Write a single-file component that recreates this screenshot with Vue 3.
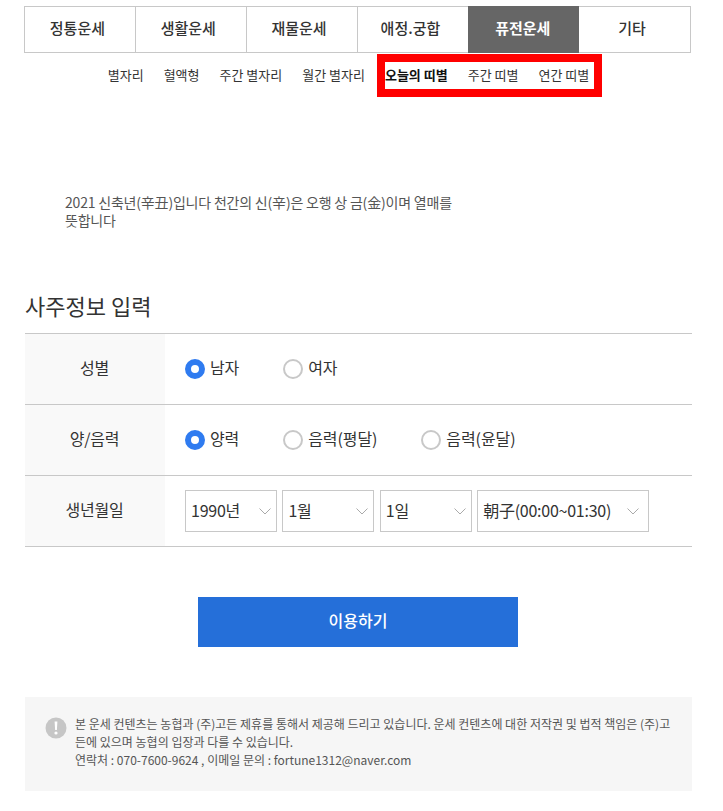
<script setup>
import { ref } from "vue";

const menus = ["정통운세", "생활운세", "재물운세", "애정.궁합", "퓨전운세", "기타"];
const subMenus = ["별자리", "혈액형", "주간 별자리", "월간 별자리", "오늘의 띠별", "주간 띠별", "연간 띠별"];

const gender = ref("남자");
const calendar = ref("양력");
const year = ref("1990년");
const month = ref("1월");
const day = ref("1일");
const time = ref("朝子(00:00~01:30)");

const genders = ["남자", "여자"];
const calendars = ["양력", "음력(평달)", "음력(윤달)"];
const years = ["1989년", "1990년", "1991년"];
const months = ["1월", "2월", "3월"];
const days = ["1일", "2일", "3일"];
const times = ["朝子(00:00~01:30)", "丑(01:30~03:30)"];
</script>

<template>
  <div class="page">
    <nav class="menu">
      <a v-for="m in menus" :key="m" class="menu-item" :class="{ active: m === '퓨전운세' }">{{ m }}</a>
    </nav>

    <div class="sub-menu">
      <a v-for="s in subMenus" :key="s" class="sub-item" :class="{ active: s === '오늘의 띠별' }">{{ s }}</a>
      <div class="highlight"></div>
    </div>

    <p class="desc">2021 신축년(辛丑)입니다 천간의 신(辛)은 오행 상 금(金)이며 열매를 뜻합니다</p>

    <h2 class="title">사주정보 입력</h2>

    <div class="form">
      <div class="row">
        <div class="label">성별</div>
        <div class="field radios">
          <label v-for="g in genders" :key="g" class="radio">
            <input v-model="gender" type="radio" name="gender" :value="g" />
            <span>{{ g }}</span>
          </label>
        </div>
      </div>
      <div class="row">
        <div class="label">양/음력</div>
        <div class="field radios">
          <label v-for="c in calendars" :key="c" class="radio">
            <input v-model="calendar" type="radio" name="calendar" :value="c" />
            <span>{{ c }}</span>
          </label>
        </div>
      </div>
      <div class="row">
        <div class="label">생년월일</div>
        <div class="field selects">
          <select v-model="year" class="select">
            <option v-for="o in years" :key="o">{{ o }}</option>
          </select>
          <select v-model="month" class="select">
            <option v-for="o in months" :key="o">{{ o }}</option>
          </select>
          <select v-model="day" class="select">
            <option v-for="o in days" :key="o">{{ o }}</option>
          </select>
          <select v-model="time" class="select wide">
            <option v-for="o in times" :key="o">{{ o }}</option>
          </select>
        </div>
      </div>
    </div>

    <div class="actions">
      <button class="submit" type="button">이용하기</button>
    </div>

    <div class="notice">
      <svg class="notice-icon" viewBox="0 0 22 22" width="22" height="22">
        <circle cx="11" cy="11" r="10.5" fill="#c6c6c6" />
        <path d="M9.6 4.6h2.8l-.5 8.4h-1.8z" fill="#fff" />
        <circle cx="11" cy="16" r="1.6" fill="#fff" />
      </svg>
      <p class="notice-text">
        본 운세 컨텐츠는 농협과 (주)고든 제휴를 통해서 제공해 드리고 있습니다. 운세 컨텐츠에 대한 저작권 및 법적 책임은 (주)고든에 있으며 농협의 입장과 다를 수 있습니다.<br />
        연락처 : 070-7600-9624 , 이메일 문의 : fortune1312@naver.com
      </p>
    </div>
  </div>
</template>

<style>
html,
body {
  margin: 0;
  background: #fff;
}
</style>

<style scoped>
* {
  box-sizing: border-box;
}

.page {
  height: 811px;
  overflow: hidden;
  padding: 6px 31px 0 25px;
  font-family: "Noto Sans CJK KR", "Noto Sans", sans-serif;
  color: #333;
}

/* 상단 메뉴 */
.menu {
  display: grid;
  grid-template-columns: repeat(6, 1fr);
  height: 47px;
  margin-left: -1px;
  margin-right: 1px;
  border: 1px solid #c8c8c8;
}

.menu-item {
  display: flex;
  align-items: center;
  justify-content: center;
  padding: 0 5px 4px 0;
  border-right: 1px solid #c8c8c8;
  font-size: 15px;
  font-weight: 500;
  color: #333;
}

.menu-item:last-child,
.menu-item:has(+ .active) {
  border-right: 0;
}

.menu-item.active {
  margin: -1px 0;
  padding-right: 2px;
  border-right: 0;
  background: #666;
  color: #fff;
  font-weight: 700;
}

/* 서브 메뉴 */
.sub-menu {
  position: relative;
  display: flex;
  justify-content: center;
  gap: 20px;
  height: 44px;
  padding: 12px 20px 0 0;
}

.sub-item {
  font-size: 13px;
  line-height: 19px;
  color: #333;
  white-space: nowrap;
}

.sub-item.active {
  font-weight: 700;
  color: #111;
}

.highlight {
  position: absolute;
  left: 352px;
  top: 1px;
  width: 225px;
  height: 43px;
  border: 8px solid #f00;
  pointer-events: none;
}

/* 설명 */
.desc {
  width: 400px;
  margin: 0 0 0 40px;
  padding-top: 96px;
  font-size: 14px;
  line-height: 18px;
  letter-spacing: -0.2px;
  color: #555;
}

.title {
  margin: 60px 0 0;
  font-size: 22px;
  line-height: 32px;
  font-weight: 400;
  color: #333;
}

/* 입력 폼 */
.form {
  margin-top: 12px;
  border-top: 1px solid #c8c8c8;
}

.row {
  display: flex;
  height: 71px;
  border-bottom: 1px solid #c8c8c8;
}

.label {
  display: flex;
  align-items: center;
  justify-content: center;
  flex: 0 0 140px;
  padding: 0 1px 5px 0;
  background: #f9f9f9;
  font-size: 16px;
  letter-spacing: -0.2px;
}

.field {
  display: flex;
  align-items: center;
  padding-left: 20px;
}

.radios {
  gap: 24px;
}

.radio {
  display: flex;
  align-items: center;
  gap: 5px;
  font-size: 16px;
  letter-spacing: -0.1px;
  color: #333;
  margin-right: 20px;
}

.radio span {
  margin-top: -5px;
}

.radio input {
  appearance: none;
  width: 20px;
  height: 20px;
  margin: 0;
  border: 2px solid #c8c8c8;
  border-radius: 50%;
  background: #fff;
}

.radio input:checked {
  border: 6px solid #2f7bf0;
}

.selects {
  gap: 5.4px;
}

.select {
  appearance: none;
  width: 92px;
  height: 42px;
  padding: 0 24px 3px 5px;
  border: 1px solid #c8c8c8;
  border-radius: 0;
  background: #fff url("data:image/svg+xml;charset=UTF-8,%3csvg xmlns='http://www.w3.org/2000/svg' viewBox='0 0 12 7' fill='none' stroke='%23aaa' stroke-width='1'%3e%3cpolyline points='.5,.5 6,6 11.5,.5'/%3e%3c/svg%3e") no-repeat right 5px center;
  background-size: 12px 7px;
  font-family: inherit;
  font-size: 16px;
  letter-spacing: -0.25px;
  color: #333;
  outline: none;
}

.select.wide {
  width: 171.5px;
  background-position: right 9px center;
}

/* 버튼 */
.actions {
  display: flex;
  justify-content: center;
  margin-top: 50px;
  padding-right: 1px;
}

.submit {
  width: 320px;
  height: 50px;
  padding: 0 0 5px;
  border: 0;
  background: #256fd9;
  color: #fff;
  font-family: inherit;
  font-size: 16px;
  font-weight: 500;
}

/* 안내 */
.notice {
  display: flex;
  gap: 8px;
  height: 94px;
  margin-top: 50px;
  padding: 20px 20px 0;
  background: #f6f6f6;
}

.notice-icon {
  flex: none;
}

.notice-text {
  margin: -2px 0 0;
  font-size: 12px;
  line-height: 18px;
  color: #555;
}
</style>
